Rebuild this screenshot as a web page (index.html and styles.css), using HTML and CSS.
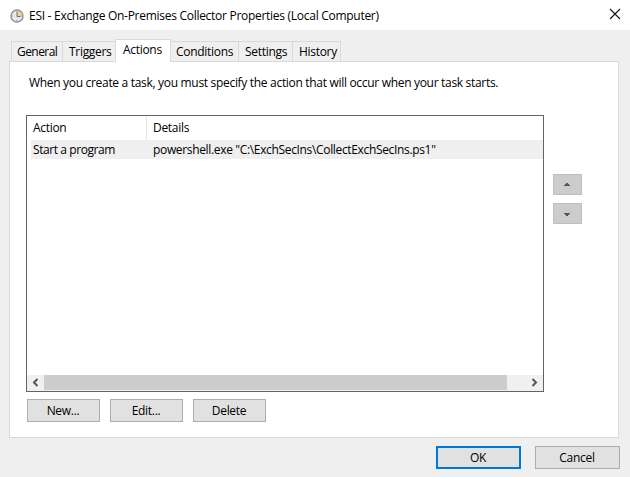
FILE: index.html
```
<!DOCTYPE html>
<html lang="en">
<head>
<meta charset="utf-8">
<title>Collector Properties</title>
<link rel="stylesheet" href="styles.css">
</head>
<body>
<div class="dialog">
  <header class="titlebar">
    <svg class="clock" width="14" height="14" viewBox="0 0 14 14">
      <circle cx="7" cy="7" r="6" fill="#dfe9ef" stroke="#929292" stroke-width="1.4"/>
      <path d="M7 7V2A5 5 0 0 1 12 7Z" fill="#f4d28b"/>
      <path d="M7 2.5V7.5H10.5" fill="none" stroke="#65727c" stroke-width="1"/>
      <path d="M2 7h1M7 11v1M11 7h1" stroke="#8d9ba5"/>
    </svg>
    <h1 class="title">ESI - Exchange On-Premises Collector Properties (Local Computer)</h1>
    <svg class="close" width="12" height="12" viewBox="0 0 12 12"><path d="M1 1L11 11M11 1L1 11" stroke="#111" stroke-width="1.1"/></svg>
  </header>
  <nav class="tabs">
    <div class="tab general"><span>General</span></div>
    <div class="tab triggers"><span>Triggers</span></div>
    <div class="tab active"><span>Actions</span></div>
    <div class="tab conditions"><span>Conditions</span></div>
    <div class="tab settings"><span>Settings</span></div>
    <div class="tab history"><span>History</span></div>
  </nav>
  <main class="panel">
    <p class="description">When you create a task, you must specify the action that will occur when your task starts.</p>
    <div class="content">
      <div class="list">
        <div class="row head"><span class="cell first">Action</span><span class="cell">Details</span></div>
        <div class="row selected"><span class="cell first">Start a program</span><span class="cell path">powershell.exe "C:\ExchSecIns\CollectExchSecIns.ps1"</span></div>
        <div class="scrollbar">
          <svg width="17" height="15" viewBox="0 0 17 15"><path d="M10.5 4L7 7.5L10.5 11" fill="none" stroke="#555" stroke-width="2"/></svg>
          <div class="thumb"></div>
          <svg class="right" width="17" height="15" viewBox="0 0 17 15"><path d="M6.5 4L10 7.5L6.5 11" fill="none" stroke="#555" stroke-width="2"/></svg>
        </div>
      </div>
      <div class="movers">
        <button class="mover"><svg width="6" height="3" viewBox="0 0 6 3" shape-rendering="crispEdges"><path d="M2 0h2v1h1v1h1v1H0V2h1V1h1z" fill="#555"/></svg></button>
        <button class="mover down"><svg width="6" height="3" viewBox="0 0 6 3" shape-rendering="crispEdges"><path d="M0 0h6v1H5v1H4v1H2V2H1V1H0z" fill="#555"/></svg></button>
      </div>
    </div>
    <div class="commands">
      <button class="btn">New...</button>
      <button class="btn">Edit...</button>
      <button class="btn">Delete</button>
    </div>
  </main>
  <footer class="footer">
    <button class="btn ok">OK</button>
    <button class="btn cancel">Cancel</button>
  </footer>
</div>
</body>
</html>
```
FILE: styles.css
```
* { box-sizing: border-box; }
body { margin: 0; }
.dialog {
  width: 630px; height: 477px; background: #efefef; color: #000;
  font: 12px/16px "Open Sans", "Noto Sans", sans-serif;
  letter-spacing: -0.3px; white-space: nowrap; overflow: hidden;
}
svg { display: block; flex: none; }
.titlebar { height: 30px; background: #fff; display: flex; align-items: center; padding: 1px 9px 0 10px; }
.title { margin: 0 auto 0 5px; font-size: 12px; font-weight: 400; line-height: 16px; letter-spacing: -0.28px; }
.close { margin-bottom: 3px; }
.tabs { height: 31px; padding-left: 11px; display: flex; align-items: flex-end; }
.tab { height: 20px; border: 1px solid #d9d9d9; border-width: 1px 0 0 1px; padding: 2px 0 0 5px; }
.general { width: 51px; letter-spacing: -0.55px; }
.triggers { width: 53px; padding-left: 6px; }
.tab.active { position: relative; width: 56px; height: 23px; margin-bottom: -1px; background: #fff; border-right-width: 1px; padding-left: 7px; }
.conditions { width: 67px; border-left: 0; padding-left: 5px; }
.settings { width: 54px; padding-left: 6px; }
.history { width: 49px; border-right-width: 1px; padding-left: 6px; }
.panel { margin: 0 11px 0 9px; height: 377px; background: #fff; border: 1px solid #d9d9d9; padding: 13px 0 0 16px; }
.description { margin: 0 0 0 3px; height: 40px; letter-spacing: -0.31px; }
.content { display: flex; }
.list { width: 518px; height: 277px; border: 1px solid #646464; display: flex; flex-direction: column; }
.row { display: flex; margin-left: 4px; }
.head { height: 24px; line-height: 24px; }
.selected { height: 19px; line-height: 19px; background: #efefef; letter-spacing: -0.42px; }
.cell { padding-left: 6px; }
.path { letter-spacing: -0.34px; }
.first { width: 116px; padding-left: 2px; }
.head .first { border-right: 1px solid #e3e3e3; }
.scrollbar { display: flex; margin-top: auto; height: 16px; background: #f0f0f0; }
.thumb { width: 463px; height: 15px; background: #cdcdcd; }
.right { margin-left: auto; }
.movers { margin: 59px 0 0 9px; display: flex; flex-direction: column; gap: 8px; }
button { font: inherit; color: inherit; letter-spacing: inherit; padding: 0 1px 0 0; display: flex; align-items: center; justify-content: center; border-radius: 0; }
.mover { width: 29px; height: 21px; background: #ccc; border: 1px solid #bfbfbf; padding: 0 1px 1px 0; }
.mover.down { padding: 2px 1px 0 0; }
.commands { display: flex; gap: 10px; margin: 7px 0 0 1px; }
.btn { width: 73px; height: 23px; background: #e1e1e1; border: 1px solid #adadad; }
.footer { display: flex; justify-content: flex-end; gap: 14px; margin: 8px 10px 0 0; }
.footer .btn { width: 85px; }
.footer .ok { border: 2px solid #0078d7; }
```
